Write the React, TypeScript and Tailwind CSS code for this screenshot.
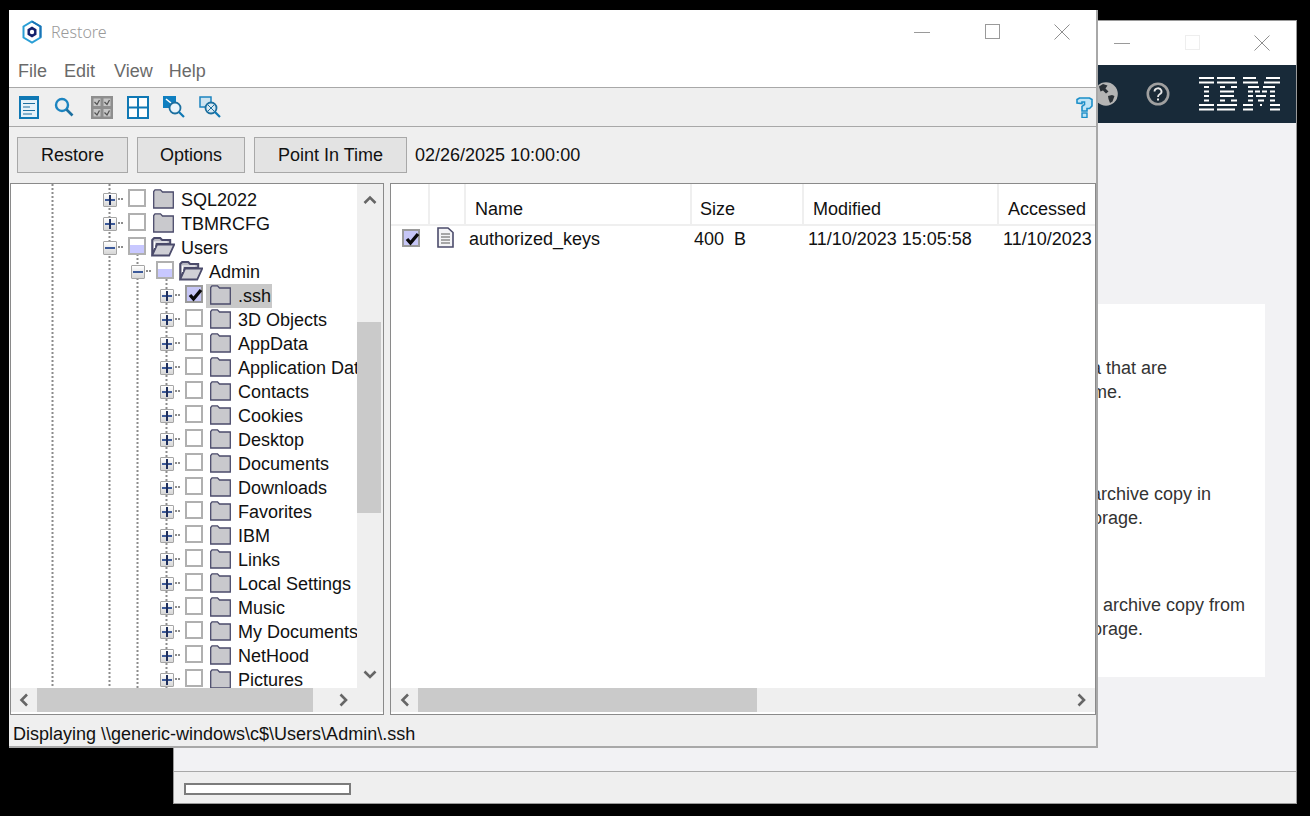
import React from "react";

type Check = "none" | "partial" | "checked";

const rows: { label: string; depth: 0 | 1 | 2; open?: boolean; check: Check; selected?: boolean }[] = [
  { label: "SQL2022", depth: 0, check: "none" },
  { label: "TBMRCFG", depth: 0, check: "none" },
  { label: "Users", depth: 0, open: true, check: "partial" },
  { label: "Admin", depth: 1, open: true, check: "partial" },
  { label: ".ssh", depth: 2, check: "checked", selected: true },
  { label: "3D Objects", depth: 2, check: "none" },
  { label: "AppData", depth: 2, check: "none" },
  { label: "Application Data", depth: 2, check: "none" },
  { label: "Contacts", depth: 2, check: "none" },
  { label: "Cookies", depth: 2, check: "none" },
  { label: "Desktop", depth: 2, check: "none" },
  { label: "Documents", depth: 2, check: "none" },
  { label: "Downloads", depth: 2, check: "none" },
  { label: "Favorites", depth: 2, check: "none" },
  { label: "IBM", depth: 2, check: "none" },
  { label: "Links", depth: 2, check: "none" },
  { label: "Local Settings", depth: 2, check: "none" },
  { label: "Music", depth: 2, check: "none" },
  { label: "My Documents", depth: 2, check: "none" },
  { label: "NetHood", depth: 2, check: "none" },
  { label: "Pictures", depth: 2, check: "none" },
];

const depthPad = { 0: "pl-[92px]", 1: "pl-[120px]", 2: "pl-[149px]" };

function WinControls({ maxClass }: { maxClass: string }) {
  return (
    <div className="-mr-px ml-auto flex">
      <div className="flex w-[70px] justify-center">
        <svg width="16" height="16"><line x1="0" y1="8.5" x2="16" y2="8.5" stroke="#9a9a9a" /></svg>
      </div>
      <div className="flex w-[70px] justify-center">
        <div className={"h-[15px] w-[15px] border " + maxClass} />
      </div>
      <div className="flex w-[70px] justify-center">
        <svg width="16" height="16"><path d="M.5.5l15 15M15.5.5l-15 15" stroke="#8f8f8f" fill="none" /></svg>
      </div>
    </div>
  );
}

function Chevron({ dir }: { dir: "up" | "down" | "left" | "right" }) {
  const d = {
    up: "M1.5 8L7 2.5 12.5 8",
    down: "M1.5 2.5L7 8 12.5 2.5",
    left: "M8 1.5L2.5 7 8 12.5",
    right: "M2.5 1.5L8 7 2.5 12.5",
  }[dir];
  const w = dir === "up" || dir === "down" ? 14 : 10;
  const h = dir === "up" || dir === "down" ? 10 : 14;
  return (
    <svg width={w} height={h}>
      <path d={d} fill="none" stroke="#666" strokeWidth="2.6" />
    </svg>
  );
}

function Folder({ open }: { open?: boolean }) {
  if (open) {
    return (
      <svg width="24" height="20" className="-ml-[2px] -mr-px shrink-0">
        <path d="M1.2 18.5V3l2-2h6l2 2h8v4H6z" fill="#b9b9c2" stroke="#4b4b6b" strokeWidth="2" />
        <path d="M1.2 18.5l5-11h17l-5 11z" fill="#d0d0d6" stroke="#4b4b6b" strokeWidth="1.8" />
        <path d="M3.5 11V5h13" fill="none" stroke="#fff" strokeWidth="1.2" />
      </svg>
    );
  }
  return (
    <svg width="21" height="20" className="shrink-0">
      <path d="M.7 19V2.5L2 .8h5.5L9.5 3h10.8v16z" fill="#c9c9cd" stroke="#4b4b6b" strokeWidth="1.3" />
    </svg>
  );
}

function CheckMark() {
  return (
    <svg width="15" height="14" viewBox="0 0 15 14" className="absolute left-[1px] top-[1px]">
      <path d="M2 7l3.5 4L13 2" fill="none" stroke="#0a0a0a" strokeWidth="3.4" />
    </svg>
  );
}

function CheckBox({ state }: { state: Check }) {
  if (state === "checked") {
    return (
      <div className="relative h-[18px] w-[18px] shrink-0 border-2 border-[#9a9a9a] bg-[#c6c6f6]">
        <CheckMark />
      </div>
    );
  }
  if (state === "partial") {
    return (
      <div className="flex h-[18px] w-[18px] shrink-0 flex-col border-2 border-[#b0b0b0] bg-white">
        <div className="h-[6px]" />
        <div className="flex-1 bg-[#c8c8ff]" />
      </div>
    );
  }
  return <div className="h-[18px] w-[18px] shrink-0 border-2 border-[#b0b0b0] bg-white" />;
}

function Expander({ open }: { open?: boolean }) {
  return (
    <div className="relative mb-px flex h-[14px] w-[14px] shrink-0 items-center justify-center rounded-[1px] border border-[#a5a5a5] bg-linear-to-b from-white to-[#d6d6d6]">
      <svg width="12" height="12">
        <rect x="1" y="5" width="10" height="2" fill="#3c5a9a" />
        {!open && <rect x="5" y="1" width="2" height="10" fill="#1f2f5c" />}
      </svg>
    </div>
  );
}

function TreeRow({ row }: { row: (typeof rows)[number] }) {
  return (
    <div className={"flex h-6 items-center whitespace-nowrap " + depthPad[row.depth]}>
      <Expander open={row.open} />
      <svg width="6" height="2" className="mb-[3px] ml-[1px] mr-[4px] shrink-0">
        <line x1="0" y1="1" x2="6" y2="1" stroke="#8c8c8c" strokeWidth="2" strokeDasharray="2 1" />
      </svg>
      <div className="mb-[4px]">
        <CheckBox state={row.check} />
      </div>
      <div className={"flex h-6 items-center " + (row.selected ? "ml-[3px] bg-[#c8c8c8] pl-[4px] pr-px" : "ml-[7px]")}>
        <div className="mb-[3px]">
          <Folder open={row.open} />
        </div>
        <span className="ml-[7px] text-[18px] leading-6 text-[#111]">{row.label}</span>
      </div>
    </div>
  );
}

function HBar({ left, thumb, rightClass }: { left: string; thumb: string; rightClass: string }) {
  return (
    <div className="mb-[2px] flex h-6 shrink-0 items-center bg-[#efefef]">
      <div className={"flex shrink-0 justify-center " + left}>
        <Chevron dir="left" />
      </div>
      <div className={"h-6 shrink-0 bg-[#cacaca] " + thumb} />
      <div className={"ml-auto flex w-[28px] justify-center " + rightClass}>
        <Chevron dir="right" />
      </div>
    </div>
  );
}

function ToolbarIcons() {
  return (
    <div className="flex h-[39px] shrink-0 items-center border-b border-[#a8a8a8] bg-[#efefef] pl-[10px]">
      <svg width="20" height="23" className="shrink-0">
        <rect x="1" y="1" width="18" height="21" fill="#e6f2f9" stroke="#0f78b4" strokeWidth="2" />
        <rect x="1" y="1" width="18" height="3" fill="#0f78b4" />
        <path d="M4 7.5h12M4 11h7M4 14.5h12M4 18h9" stroke="#1d6f9f" strokeWidth="1.2" />
      </svg>
      <svg width="20" height="20" className="ml-[15px] shrink-0">
        <circle cx="8" cy="8" r="6" fill="none" stroke="#1c84c0" strokeWidth="2.4" />
        <path d="M12.5 12.5l6 6" stroke="#1c6f9f" strokeWidth="2.6" />
      </svg>
      <svg width="22" height="23" className="ml-[17px] shrink-0">
        <rect width="22" height="23" fill="#8e8e8e" />
        <rect x="2.5" y="2.5" width="7" height="7.5" fill="#c6c6c6" />
        <rect x="12.5" y="2.5" width="7" height="7.5" fill="#c6c6c6" />
        <rect x="2.5" y="13" width="7" height="7.5" fill="#c6c6c6" />
        <rect x="12.5" y="13" width="7" height="7.5" fill="#c6c6c6" />
        <path d="M3.5 6l2.5 2.5L8.5 4M13.5 6l2.5 2.5L18.5 4M3.5 16.5L6 19l2.5-4.5M13.5 16.5L16 19l2.5-4.5" fill="none" stroke="#555" strokeWidth="1.3" />
      </svg>
      <svg width="22" height="23" className="ml-[14px] shrink-0">
        <rect x="1" y="1" width="20" height="21" fill="#fdfdfd" stroke="#0f78b4" strokeWidth="2" />
        <path d="M11 1v21M1 11.5h20" stroke="#0f78b4" strokeWidth="2" />
      </svg>
      <svg width="22" height="22" className="ml-[14px] shrink-0">
        <rect width="13" height="12" fill="#0f7fc0" />
        <path d="M3 3l5 4" stroke="#fff" strokeWidth="1.6" />
        <circle cx="12" cy="12" r="5.5" fill="#eaf4fa" stroke="#1c6f9f" strokeWidth="1.8" />
        <path d="M16 16l5 5" stroke="#0f78b4" strokeWidth="2.2" />
      </svg>
      <svg width="22" height="22" className="ml-[14px] shrink-0">
        <rect x="1" y="1" width="11" height="10" fill="#cfe4f0" stroke="#1c84c0" strokeWidth="1.5" />
        <circle cx="12" cy="12" r="5.5" fill="#d8e8f1" stroke="#1c6f9f" strokeWidth="1.8" />
        <path d="M9 9l6 6M15 9l-6 6" stroke="#1c6f9f" strokeWidth="1" />
        <path d="M16 16l5 5" stroke="#0f78b4" strokeWidth="2.2" />
      </svg>
      <svg width="17" height="21" className="ml-auto mr-[3px] shrink-0">
        <path d="M1 6V2.5L3.5 1h10L16 2.5V9l-2.5 2.5H11V14H6v-4.5l2.5-2V5H6v1.5z" fill="#bfe4f6" stroke="#1b8ec8" strokeWidth="1.6" />
        <rect x="6" y="16" width="5" height="4.5" fill="#bfe4f6" stroke="#1b8ec8" strokeWidth="1.4" />
      </svg>
    </div>
  );
}

function IbmLogo() {
  const spans: number[][][] = [
    [[0, 15], [18, 36], [44, 57], [67, 81]],
    [[0, 15], [18, 38], [44, 59], [65, 81]],
    [[5, 10], [21, 26], [32, 38], [49, 60], [64, 76]],
    [[5, 10], [21, 35], [49, 54], [56, 61], [63, 68], [71, 76]],
    [[5, 10], [21, 35], [49, 54], [57, 67], [71, 76]],
    [[5, 10], [21, 26], [32, 38], [49, 54], [59, 65], [71, 76]],
    [[0, 15], [18, 38], [44, 54], [61, 63], [71, 81]],
    [[0, 15], [18, 36], [44, 54], [71, 81]],
  ];
  return (
    <svg width="81" height="34" className="shrink-0">
      {spans.map((row, y) =>
        row.map(([a, b]) => <rect key={y + "-" + a} x={a} y={y * 4.5} width={b - a} height="2" fill="#fff" />)
      )}
    </svg>
  );
}

function BackWindow() {
  return (
    <div className="absolute left-[173px] top-[20px] flex h-[784px] w-[1124px] flex-col border border-[#9a9a9a] bg-[#f2f2f4]">
      <div className="flex h-[44px] items-center bg-white">
        <WinControls maxClass="border-[#eeeeee]" />
      </div>
      <div className="flex h-[58px] items-center justify-end bg-[#182a39] pr-[16px]">
        <svg width="24" height="24" className="mr-[28px] shrink-0">
          <circle cx="12" cy="12" r="11.8" fill="#b4b4b4" />
          <path d="M5 4.5l4-2.5 4.5 1.5-2 3 3 3-2.5 2-3-3-2.5 1zM14 14l4-1 2.5 1-2 5.5-2.5 1.5-1.5-4z" fill="#2a3036" />
        </svg>
        <svg width="24" height="24" className="mr-[29px] shrink-0">
          <circle cx="12" cy="12" r="10.2" fill="#1b2a36" stroke="#a0a0a0" strokeWidth="2.6" />
          <path d="M8.5 9.5a3.5 3.2 0 1 1 5.2 2.8c-1.2.7-1.7 1.2-1.7 2.7" fill="none" stroke="#e8e8e8" strokeWidth="1.8" />
          <rect x="11" y="16.5" width="2" height="2" fill="#e8e8e8" />
        </svg>
        <IbmLogo />
      </div>
      <div className="flex-1 pr-[31px] pt-[181px]">
        <div className="h-[373px] bg-white pt-[52px] text-right text-[18px] leading-6 text-[#333]">
          <p className="pr-[98px]">data that are</p>
          <p className="pr-[143px]">time.</p>
          <p className="mt-[78px] pr-[54px]">archive copy in</p>
          <p className="pr-[122px]">storage.</p>
          <p className="mt-[63px] pr-[20px]">an archive copy from</p>
          <p className="pr-[122px]">storage.</p>
        </div>
      </div>
      <div className="flex h-[32px] shrink-0 items-center border-t border-[#a8a8a8] bg-[#efefef] pl-[10px] pt-[3px]">
        <div className="h-[12px] w-[167px] border-2 border-[#7c7c7c] bg-white" />
      </div>
    </div>
  );
}

function ToolButton({ label, width }: { label: string; width: string }) {
  return (
    <button className={"h-[36px] border border-[#a8a8a8] bg-[#e3e3e3] text-[18px] text-[#111] " + width}>{label}</button>
  );
}

function TreePane() {
  return (
    <div className="flex h-full w-[374px] shrink-0 flex-col border border-[#8a8a8a] bg-white">
      <div className="flex min-h-0 flex-1">
        <div className="relative h-full w-[346px] overflow-hidden pt-[4px]">
          <svg width="346" height="504" className="absolute left-0 top-0">
            <g stroke="#8c8c8c" strokeWidth="2" strokeDasharray="2 2">
              <line x1="41.5" y1="0" x2="41.5" y2="504" />
              <line x1="98.5" y1="0" x2="98.5" y2="504" />
              <line x1="126.5" y1="70" x2="126.5" y2="504" />
              <line x1="155.5" y1="95" x2="155.5" y2="504" />
            </g>
          </svg>
          <div className="relative">
            {rows.map((r) => (
              <TreeRow key={r.label} row={r} />
            ))}
          </div>
        </div>
        <div className="flex w-[26px] shrink-0 flex-col items-center bg-[#efefef]">
          <div className="flex h-[21px] items-end">
            <Chevron dir="up" />
          </div>
          <div className="mt-[117px] h-[191px] w-[24px] -translate-x-px bg-[#cacaca]" />
          <div className="mt-auto flex h-[19px] items-start">
            <Chevron dir="down" />
          </div>
        </div>
      </div>
      <HBar left="w-[26px]" thumb="w-[276px]" rightClass="mr-[26px]" />
    </div>
  );
}

function FilePane() {
  return (
    <div className="flex h-full min-w-0 flex-1 flex-col border border-[#8a8a8a] bg-white">
      <div className="min-h-0 flex-1 overflow-hidden">
        <div className="flex h-[42px] items-end border-b-2 border-[#efefef] text-[18px] leading-6 text-[#111]">
          <div className="h-[40px] w-[37px] shrink-0" />
          <div className="h-[40px] w-[36px] shrink-0 border-l-2 border-[#efefef]" />
          <div className="h-[40px] w-[226px] shrink-0 border-l-2 border-[#efefef] pl-[9px] pt-[13px]">Name</div>
          <div className="h-[40px] w-[112px] shrink-0 border-l-2 border-[#efefef] pl-[8px] pt-[13px]">Size</div>
          <div className="h-[40px] w-[195px] shrink-0 border-l-2 border-[#efefef] pl-[9px] pt-[13px]">Modified</div>
          <div className="h-[40px] flex-1 whitespace-nowrap border-l-2 border-[#efefef] pl-[9px] pt-[13px]">Accessed</div>
        </div>
        <div className="mt-px flex h-6 items-center text-[18px] leading-6 text-[#111]">
          <div className="mb-[2px] flex w-[38px] shrink-0 pl-[11px]">
            <CheckBox state="checked" />
          </div>
          <div className="flex w-[36px] shrink-0 pl-[8px]">
            <svg width="17" height="21" className="mb-[3px]">
              <path d="M1 1h10l5 4.5V20H1z" fill="#f4f4f6" stroke="#4b4b6b" strokeWidth="1.6" />
              <path d="M4 7h9M4 10h9M4 13h9M4 16h9" stroke="#8c8c8c" strokeWidth="1.5" />
            </svg>
          </div>
          <div className="w-[226px] shrink-0 pl-[4px]">authorized_keys</div>
          <div className="w-[112px] shrink-0 pl-[3px]">
            400{"\u00a0\u00a0"}B
          </div>
          <div className="w-[195px] shrink-0 pl-[5px]">11/10/2023 15:05:58</div>
          <div className="pl-[5px]">11/10/2023</div>
        </div>
      </div>
      <HBar left="w-[27px]" thumb="w-[339px]" rightClass="" />
    </div>
  );
}

function FrontWindow() {
  return (
    <div className="absolute left-[9px] top-[10px] flex h-[738px] w-[1089px] flex-col border-b-2 border-r-2 border-[#a8a8a8] bg-[#efefef]">
      <div className="flex h-[48px] shrink-0 items-center bg-white pb-[5px] pl-[12px]">
        <svg width="22" height="24" viewBox="0 0 22 24" className="shrink-0">
          <path d="M11 1.5l8.5 5v11l-8.5 5-8.5-5v-11z" fill="none" stroke="#2a9fd6" strokeWidth="2" />
          <path d="M11 1.5l8.5 5v11" fill="none" stroke="#1a73b5" strokeWidth="2" />
          <path d="M11 6.5l4.5 2.7v5.6L11 17.5l-4.5-2.7V9.2z" fill="#13206b" />
          <circle cx="11" cy="12" r="2.2" fill="#fff" />
        </svg>
        <span className="ml-[8px] font-['Noto_Sans',sans-serif] text-[16px] font-light text-[#9a9a9a]">Restore</span>
        <WinControls maxClass="border-[#9a9a9a]" />
      </div>
      <div className="flex h-[30px] shrink-0 items-center border-b border-[#a8a8a8] bg-white pb-[2px] pl-[9px] text-[18px] text-[#6a6a6a]">
        <span>File</span>
        <span className="ml-[17px]">Edit</span>
        <span className="ml-[19px]">View</span>
        <span className="ml-[16px]">Help</span>
      </div>
      <ToolbarIcons />
      <div className="flex h-[56px] shrink-0 items-center gap-[9px] pl-[8px] text-[18px] text-[#111]">
        <ToolButton label="Restore" width="w-[111px]" />
        <ToolButton label="Options" width="w-[108px]" />
        <ToolButton label="Point In Time" width="w-[153px]" />
        <span className="ml-[-1px]">02/26/2025 10:00:00</span>
      </div>
      <div className="flex min-h-0 flex-1 pl-px">
        <TreePane />
        <div className="w-[6px] shrink-0" />
        <FilePane />
      </div>
      <div className="flex h-[31px] shrink-0 items-center pl-[4px] pt-[8px] text-[18px] text-[#111]">
        {"Displaying \\\\generic-windows\\c$\\Users\\Admin\\.ssh"}
      </div>
    </div>
  );
}

export default function App() {
  return (
    <div className="relative h-[816px] w-[1310px] overflow-hidden bg-black font-['Liberation_Sans',Arial,sans-serif]">
      <BackWindow />
      <FrontWindow />
    </div>
  );
}
